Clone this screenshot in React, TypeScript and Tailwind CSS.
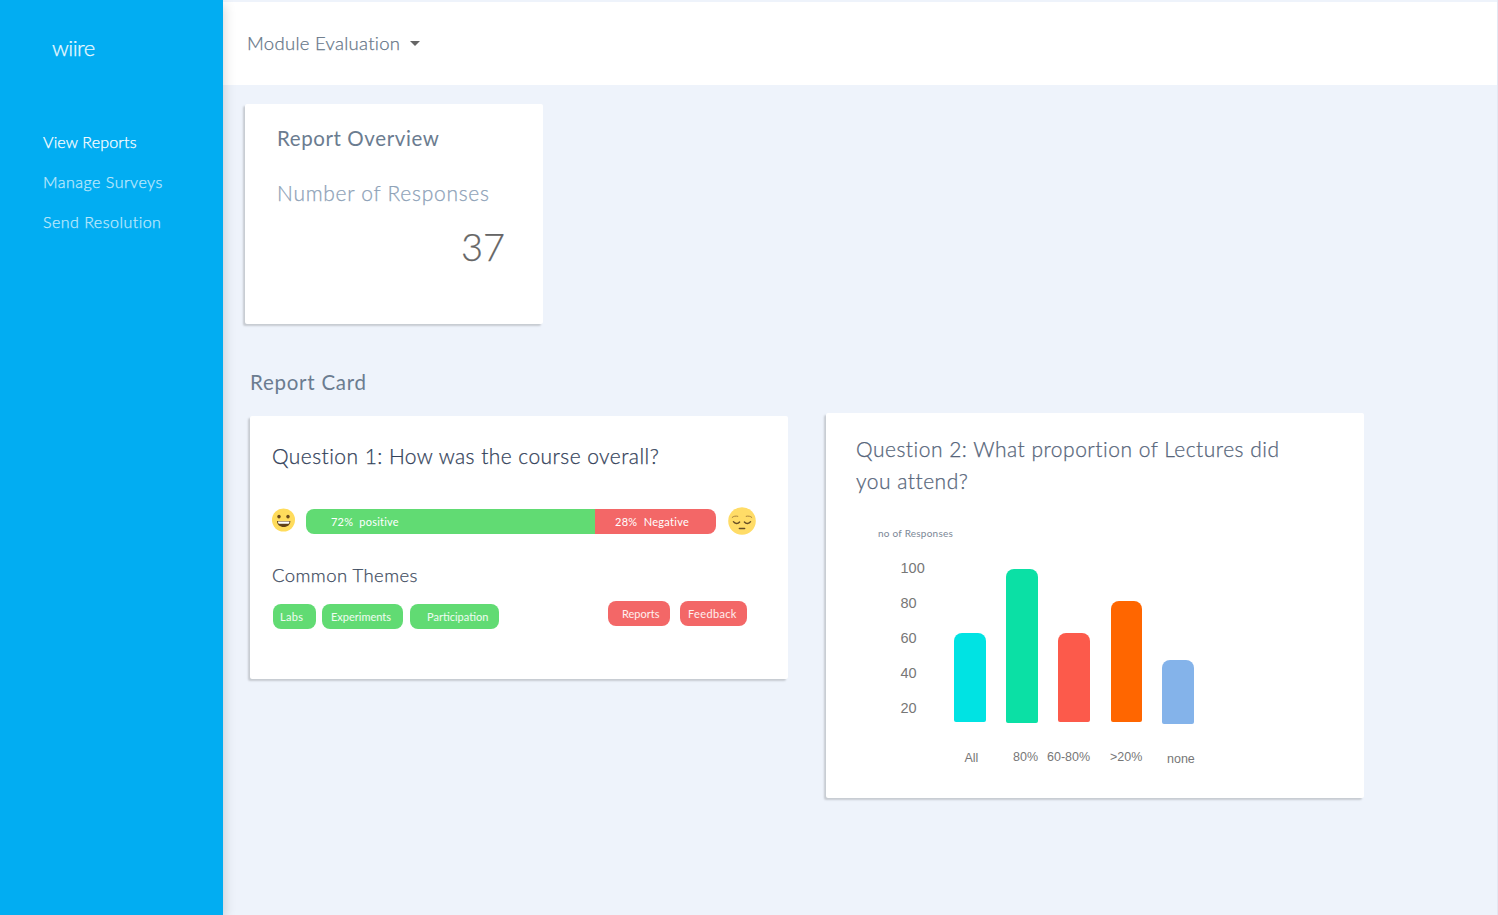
import React from "react";

const LIGHT = "font-['Lato',sans-serif] font-light whitespace-pre [-webkit-text-stroke:0.25px] ";
const REGULAR = "font-['Lato',sans-serif] font-normal whitespace-pre ";
const CARD = "bg-white rounded-[2px] shadow-[-2px_2px_2px_0px_rgba(0,0,0,0.17)] ";

function Sidebar() {
  return (
    <aside className="relative z-10 flex w-[223px] shrink-0 flex-col bg-[#02adf2] text-white shadow-[0_4px_12px_0px_rgba(0,0,0,0.2)]">
      <div className={LIGHT + "mt-8 pl-[52px] text-[22px] leading-8 text-white/90 tracking-[-0.5px]"}>wiire</div>
      <nav className="mt-[58px] flex flex-col pl-[43px]">
        <a className={LIGHT + "text-base leading-10 tracking-[0.15px]"}>View Reports</a>
        <a className={LIGHT + "text-base leading-10 tracking-[0.5px] text-white/65"}>Manage Surveys</a>
        <a className={LIGHT + "text-base leading-10 tracking-[0.48px] text-white/65"}>Send Resolution</a>
      </nav>
    </aside>
  );
}

function HappyFace() {
  return (
    <svg viewBox="0 0 24 24" className="h-6 w-6">
      <circle cx="12.5" cy="12" r="11.5" fill="#ffdc5c" />
      <ellipse cx="8" cy="8.6" rx="1.7" ry="1.9" fill="#6b4a1b" />
      <ellipse cx="17" cy="8.6" rx="1.7" ry="1.9" fill="#6b4a1b" />
      <path d="M6 13h13.4c0 3.8-2.9 6-6.7 6S6 16.800 6 13z" fill="#5f4018" />
      <path d="M7 13.400h11.400c0 1.600-.5 2.400-1.400 2.400H8.400c-.9 0-1.400-.8-1.400-2.400z" fill="#fff" />
    </svg>
  );
}

function SadFace() {
  return (
    <svg viewBox="0 0 28 28" className="h-7 w-7" fill="none" strokeLinecap="round">
      <circle cx="14" cy="14" r="13.8" fill="#ffdc67" />
      <path d="M4.200 10.400c1.400-1.300 3.400-1.600 5.600-1.100M23.800 10.400c-1.400-1.300-3.400-1.600-5.600-1.100" stroke="#a9823c" strokeWidth="1" />
      <path d="M5.400 14.700c1.600 2.300 4.600 2.300 6.200.3M22.600 14.700c-1.600 2.300-4.600 2.300-6.200.3" stroke="#664e27" strokeWidth="1.400" />
      <path d="M11.400 21.500h5.200" stroke="#664e27" strokeWidth="1.500" />
    </svg>
  );
}

const PILL = REGULAR + "flex h-[25px] items-center rounded-[8px] pt-px text-[11px] text-white/90 ";

function QuestionOne() {
  return (
    <section className={CARD + "mt-[3px] h-[263px] w-[538px] px-[22px] pt-6"}>
      <h3 className={LIGHT + "text-[21px] leading-8 tracking-[0.44px] text-[#33425a]"}>
        Question 1: How was the course overall?
      </h3>
      <div className="mt-[35px] flex h-7 items-center">
        <div className="-ml-0.5 -mt-[3px] mr-2.5 w-6 pl-px"><HappyFace /></div>
        <div className={REGULAR + "ml-0.5 flex h-[25px] w-[410px] overflow-hidden rounded-[8px] text-[11px] leading-[26px] text-white"}>
          <div className="w-[289px] bg-[#61db73] pl-[25px] tracking-[0.22px]">{"72%  positive"}</div>
          <div className="flex-1 bg-[#f36767] pl-5 tracking-[0.3px]">{"28%  Negative"}</div>
        </div>
        <div className="-mt-px ml-3"><SadFace /></div>
      </div>
      <h4 className={LIGHT + "mt-[24px] text-[18.5px] leading-8 tracking-[0.44px] text-[#3f4d61]"}>Common Themes</h4>
      <div className="mt-[10px] flex pl-px">
        <div className="mt-[3px] flex gap-1.5">
          <span className={PILL + "w-[43px] bg-[#61db73] pl-[7px] tracking-[0.3px]"}>Labs</span>
          <span className={PILL + "w-[81px] bg-[#61db73] pl-[9px]"}>Experiments</span>
          <span className={PILL + "ml-px w-[89px] bg-[#61db73] pl-[17px]"}>Participation</span>
        </div>
        <div className="ml-[109px] flex gap-2.5">
          <span className={PILL + "w-[62px] bg-[#f36767] pl-[14px]"}>Reports</span>
          <span className={PILL + "w-[67px] bg-[#f36767] pl-2 tracking-[0.35px]"}>Feedback</span>
        </div>
      </div>
    </section>
  );
}

const TICKS = ["100", "80", "60", "40", "20"];

function QuestionTwo() {
  return (
    <section className={CARD + "ml-[38px] h-[385px] w-[538px] pl-[30px] pt-[20px]"}>
      <h3 className={LIGHT + "text-[21px] leading-8 tracking-[0.5px] text-[#56657a]"}>
        Question 2: What proportion of Lectures did
        <br />
        you attend?
      </h3>
      <div className={REGULAR + "mt-[28px] pl-[22px] text-[10px] leading-4 tracking-[0.23px] text-[#7b8796]"}>no of Responses</div>
      <div className="mt-[9px] flex pl-11 font-['Liberation_Sans',sans-serif] text-[14.5px] text-[#777]">
        <div className="flex w-[54px] flex-col pl-[0.5px] pt-px">
          {TICKS.map((t) => (
            <div key={t} className="h-[35px] leading-[35px]">{t}</div>
          ))}
        </div>
        <div className="flex h-[174px] items-end">
          <div className="mb-0.5 h-[89px] w-8 rounded-t-[8px] rounded-b-[2px] bg-[#00e3e3]" />
          <div className="mb-px ml-5 h-[154px] w-8 rounded-t-[8px] rounded-b-[2px] bg-[#0be0a5]" />
          <div className="mb-0.5 ml-5 h-[89px] w-8 rounded-t-[8px] rounded-b-[2px] bg-[#fc5a4b]" />
          <div className="mb-0.5 ml-[21px] h-[121px] w-[31px] rounded-t-[8px] rounded-b-[2px] bg-[#ff6600]" />
          <div className="ml-5 h-16 w-8 rounded-t-[8px] rounded-b-[2px] bg-[#84b3ea]" />
        </div>
      </div>
      <div className="mt-[23px] flex pl-[108px] font-['Liberation_Sans',sans-serif] text-[12.5px] leading-4 text-[#777]">
        <span className="w-[49px] pl-[0.5px] pt-px">All</span>
        <span className="w-[34px]">80%</span>
        <span className="w-[63px]">60-80%</span>
        <span className="w-[57px]">&gt;20%</span>
        <span className="pt-0.5">none</span>
      </div>
    </section>
  );
}

export default function App() {
  return (
    <div className="flex h-[915px] w-[1498px] overflow-hidden bg-[#eef3fb]">
      <Sidebar />
      <main className="flex flex-1 flex-col border-r border-[#e3e7f2] pt-0.5">
        <header className="flex h-[83px] items-center bg-white pl-6">
          <span className={LIGHT + "-mt-0.5 text-[18.5px] leading-8 tracking-[0.3px] text-[#667688]"}>Module Evaluation</span>
          <svg viewBox="0 0 10 5" className="ml-2.5 h-[5px] w-2.5">
            <path d="M0 0h10L5 5z" fill="#666" />
          </svg>
        </header>
        <section className={CARD + "ml-[22px] mt-[19px] flex h-[220px] w-[298px] flex-col pl-8 pt-[18px]"}>
          <h2 className={REGULAR + "text-[20.5px] leading-8 tracking-[0.6px] text-[#6b7c90]"}>Report Overview</h2>
          <p className={LIGHT + "mt-[23px] text-[21px] leading-8 tracking-[0.72px] text-[#8ea2b8]"}>Number of Responses</p>
          <p className={LIGHT + "mt-[13px] pr-[38px] text-right text-[38px] leading-[48px] text-[#666] [-webkit-text-stroke:0.5px]"}>37</p>
        </section>
        <h2 className={REGULAR + "ml-[27px] mt-[42px] text-[20.5px] leading-8 tracking-[0.75px] text-[#6b7c90]"}>Report Card</h2>
        <div className="ml-[27px] mt-[15px] flex items-start">
          <QuestionOne />
          <QuestionTwo />
        </div>
      </main>
    </div>
  );
}
